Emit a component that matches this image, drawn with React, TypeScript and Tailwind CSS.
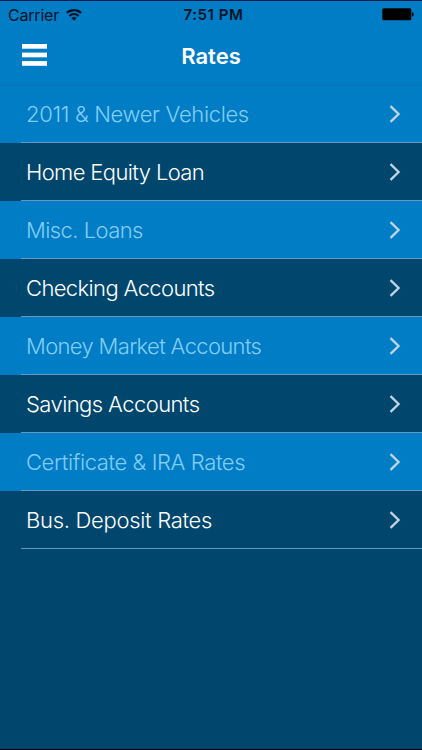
const rates = [
  { label: "2011 & Newer Vehicles", tracking: "tracking-[-0.34px]" },
  { label: "Home Equity Loan", tracking: "tracking-[-0.62px]" },
  { label: "Misc. Loans", tracking: "tracking-[-0.56px]" },
  { label: "Checking Accounts", tracking: "tracking-[-0.62px]" },
  { label: "Money Market Accounts", tracking: "tracking-[-0.66px]" },
  { label: "Savings Accounts", tracking: "tracking-[-0.58px]" },
  { label: "Certificate & IRA Rates", tracking: "tracking-[-0.4px]" },
  { label: "Bus. Deposit Rates", tracking: "tracking-[-0.3px]" },
];

function WifiIcon() {
  return (
    <svg width="16" height="12" viewBox="0 0 16 12" fill="none" stroke="currentColor" strokeWidth="2.1">
      <path d="M0.8 4.1C4.8 0.1 11.2 0.1 15.2 4.1" />
      <path d="M3.4 6.9C6 4.4 10 4.4 12.6 6.9" />
      <path d="M8 11.8L5.3 9.1C6.8 7.6 9.2 7.6 10.7 9.1Z" fill="currentColor" stroke="none" />
    </svg>
  );
}

function BatteryIcon() {
  return (
    <svg width="32" height="13" viewBox="0 0 32 13" fill="currentColor">
      <rect x="0.3" y="0.3" width="29" height="12" rx="1.5" />
      <path d="M30 4.2C32.3 4.2 32.3 8.4 30 8.4Z" />
    </svg>
  );
}

function MenuIcon() {
  return (
    <svg width="25" height="22" viewBox="0 0 25 22" fill="white">
      <rect width="25" height="4.7" />
      <rect y="8.6" width="25" height="4.7" />
      <rect y="17.1" width="25" height="4.7" />
    </svg>
  );
}

function StatusBar() {
  return (
    <div className="flex h-[27px] items-center justify-between px-2 text-[#001225]">
      <div className="flex w-32 items-center gap-[7px] text-[16px] tracking-[-0.2px]">
        Carrier
        <WifiIcon />
      </div>
      <span className="pl-[5px] pt-0.5 text-[15px] font-semibold tracking-[0.55px]">7:51 PM</span>
      <div className="flex w-32 justify-end text-black">
        <BatteryIcon />
      </div>
    </div>
  );
}

function Chevron() {
  return (
    <svg width="12" height="18" viewBox="0 0 12 18" fill="none" stroke="#bfd5e4" strokeWidth="2.3">
      <path d="M1.5 1.2L9.6 9L1.5 16.8" />
    </svg>
  );
}

export default function App() {
  return (
    <div className="flex h-[750px] w-[422px] flex-col border-b border-black bg-[#00466d] font-[Inter,sans-serif] text-white">
      <header className="h-[85px] border-t border-t-[#001a48] bg-[#007dc5]">
        <StatusBar />
        <div className="grid h-14 grid-cols-3 items-center px-[22px]">
          <button aria-label="Menu" className="pb-0.5">
            <MenuIcon />
          </button>
          <h1 className="text-center text-[22px] font-semibold">Rates</h1>
        </div>
      </header>
      <ul className="border-t border-[#0872b5] bg-[#007dc5]">
        {rates.map((rate, i) => (
          <li
            key={rate.label}
            className={`first:-mt-px ${i % 2 === 0 ? "text-[#83cdf6]" : "bg-[#00466d] text-white"}`}
          >
            <div className="ml-[21px] flex h-[58px] items-center justify-between border-b border-[#6496bf] pl-[5px] pr-[21px]">
              <span className={`whitespace-nowrap pt-0.5 text-[22px] font-light ${rate.tracking}`}>{rate.label}</span>
              <Chevron />
            </div>
          </li>
        ))}
      </ul>
    </div>
  );
}
